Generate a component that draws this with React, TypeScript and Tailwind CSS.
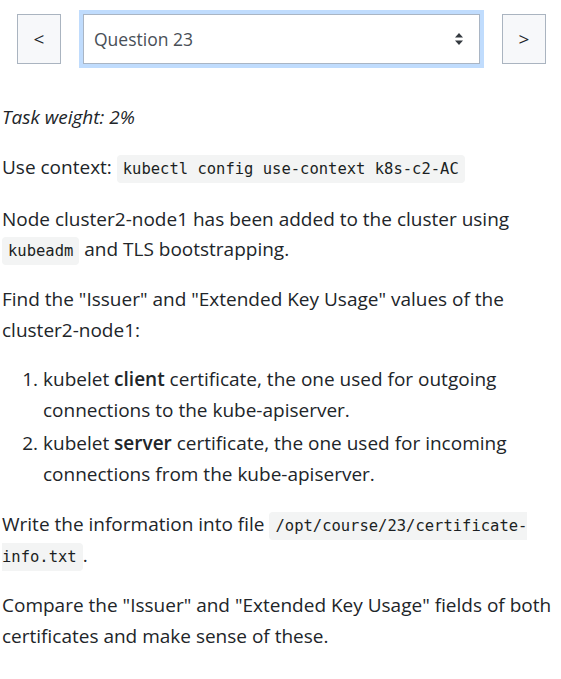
import React from "react";

const sans = { fontFamily: '"Open Sans", "Noto Sans", sans-serif' };

function Code({ children }: { children: React.ReactNode }) {
  return (
    <code className="rounded-[4px] bg-[#f3f4f4] px-[6px] py-[5px] text-[15.5px] leading-[17px] text-[#1b1f23] [font-family:'DejaVu_Sans_Mono',monospace]">
      {children}
    </code>
  );
}

export default function App() {
  return (
    <div className="min-h-[679px] w-[561px] bg-white text-[#212529]" style={sans}>
      <div className="flex items-center pl-[17px] pr-[15px] pt-[14px]">
        <button className="flex h-[50px] w-[44px] items-center justify-center border border-[#aab4c0] bg-[#f7f8fa] text-[19px] text-[#212529]">
          &lt;
        </button>
        <div className="mx-[22px] flex h-[50px] flex-1 items-center justify-between border border-[#a9b5c4] bg-white pl-[10px] pr-[15px] shadow-[0_0_0_4px_#c0dcfd]">
          <span className="text-[17.5px] text-[#495057]">Question 23</span>
          <svg width="10" height="14" viewBox="0 0 10 14">
            <path d="M5 1 L9 5.5 L1 5.5 Z" fill="#343a40" />
            <path d="M5 13 L9 8.5 L1 8.5 Z" fill="#343a40" />
          </svg>
        </div>
        <button className="flex h-[50px] w-[44px] items-center justify-center border border-[#aab4c0] bg-[#f7f8fa] text-[19px] text-[#212529]">
          &gt;
        </button>
      </div>

      <div className="mt-[38px] pl-[2px] pr-[2px] text-[19px] leading-[31px]">
        <p className="mb-[19px] italic">Task weight: 2%</p>
        <p className="mb-[21px]">
          Use context: <Code>kubectl config use-context k8s-c2-AC</Code>
        </p>
        <p className="mb-[20px] leading-[30px]">
          Node cluster2-node1 has been added to the cluster using <Code>kubeadm</Code> and TLS bootstrapping.
        </p>
        <p className="mb-[18px]">
          Find the "Issuer" and "Extended Key Usage" values of the cluster2-node1:
        </p>
        <ol className="mb-[19px] list-decimal pl-[41px]">
          <li>
            kubelet <strong className="font-semibold">client</strong> certificate, the one used for outgoing connections to the kube-apiserver.
          </li>
          <li className="mt-[2px]">
            kubelet <strong className="font-semibold">server</strong> certificate, the one used for incoming connections from the kube-apiserver.
          </li>
        </ol>
        <p className="mb-[19px]">
          Write the information into file <Code>/opt/course/23/certificate-info.txt</Code>.
        </p>
        <p className="mb-[19px]">
          Compare the "Issuer" and "Extended Key Usage" fields of both certificates and make sense of these.
        </p>
      </div>
    </div>
  );
}
